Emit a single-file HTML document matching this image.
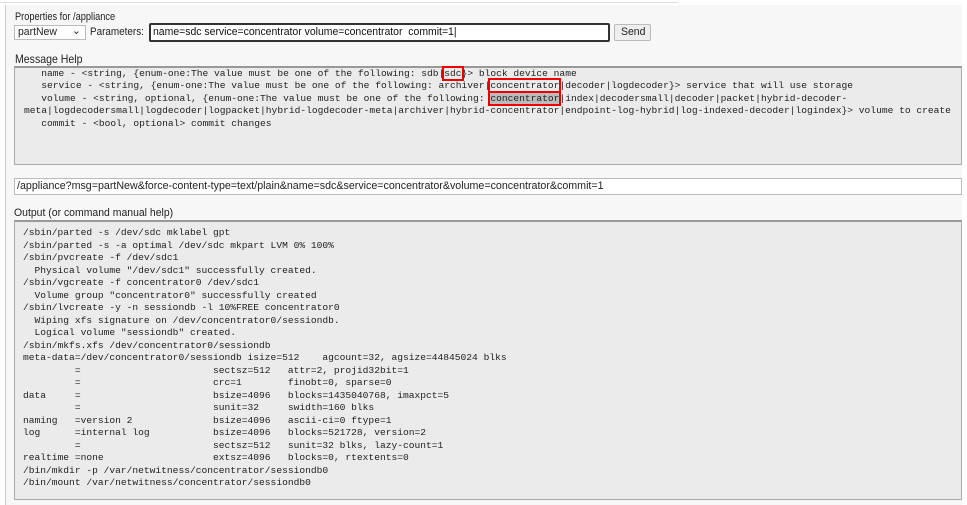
<!DOCTYPE html>
<html><head><meta charset="utf-8"><style>
*{margin:0;padding:0;box-sizing:border-box}
body{width:967px;height:492px;overflow:hidden;background:#fff;position:relative;font-family:"Liberation Sans",Arial,sans-serif;color:#222}
.abs{position:absolute}
.topline{left:0;top:0;width:678px;height:3px;border-bottom:1px solid #ddd}
.panel{left:5px;top:5px;width:957px;height:500px;background:#f7f7f7;border-left:1px solid #ccc}
.lbl{font-size:11px;white-space:nowrap;transform:scaleX(.95);transform-origin:left top;line-height:13px}
.ta{background:#ebebeb;border:1px solid #aaa;border-top:2px solid #999}
.mono{font-family:"Liberation Mono","DejaVu Sans Mono",monospace;font-size:9.6px;line-height:12.4px;white-space:pre;color:#222}
.rb{outline:2px solid #e00;outline-offset:0}
</style></head><body>
<div class="abs topline"></div>
<div class="abs panel"></div>
<div class="abs lbl" style="left:15px;top:11px;transform:scaleX(.84)">Properties for /appliance</div>
<div class="abs" style="left:14px;top:25px;width:72px;height:15px;border:1px solid #bbb;background:#fff"></div>
<div class="abs lbl" style="left:18px;top:26px">partNew</div>
<div class="abs lbl" style="left:72px;top:25px">&#8964;</div>
<div class="abs lbl" style="left:90px;top:26px;transform:scaleX(.9)">Parameters:</div>
<div class="abs" style="left:149px;top:23px;width:461px;height:19px;border:2px solid #333;border-radius:2px;background:#fff"></div>
<div class="abs lbl" style="left:153px;top:26px;color:#111">name=sdc service=concentrator volume=concentrator&nbsp; commit=1|</div>
<div class="abs" style="left:614px;top:24px;width:37px;height:17px;border:1px solid #bbb;border-radius:2px;background:#eee"></div>
<div class="abs lbl" style="left:621px;top:26px">Send</div>
<div class="abs lbl" style="left:15px;top:53px;font-size:12px;transform:scaleX(.88)">Message Help</div>
<div class="abs ta" style="left:14px;top:66px;width:948px;height:99px"></div>
<div class="abs mono" style="left:24px;top:68px">   name - &lt;string, {enum-one:The value must be one of the following: sdb|<span class="rb">sdc</span>}&gt; block device name
   service - &lt;string, {enum-one:The value must be one of the following: archiver|<span class="rb">concentrator</span>|decoder|logdecoder}&gt; service that will use storage
   volume - &lt;string, optional, {enum-one:The value must be one of the following: <span class="rb" style="background:#bbb">concentrator</span>|index|decodersmall|decoder|packet|hybrid-decoder-
meta|logdecodersmall|logdecoder|logpacket|hybrid-logdecoder-meta|archiver|hybrid-concentrator|endpoint-log-hybrid|log-indexed-decoder|logindex}&gt; volume to create
   commit - &lt;bool, optional&gt; commit changes</div>
<div class="abs" style="left:14px;top:178px;width:948px;height:17px;border:1px solid #bbb;background:#fff"></div>
<div class="abs lbl" style="left:17px;top:180px;transform:scaleX(.97)">/appliance?msg=partNew&amp;force-content-type=text/plain&amp;name=sdc&amp;service=concentrator&amp;volume=concentrator&amp;commit=1</div>
<div class="abs lbl" style="left:14px;top:207px">Output (or command manual help)</div>
<div class="abs ta" style="left:14px;top:220px;width:948px;height:280px"></div>
<div class="abs mono" style="left:23px;top:227px;line-height:12.5px">/sbin/parted -s /dev/sdc mklabel gpt
/sbin/parted -s -a optimal /dev/sdc mkpart LVM 0% 100%
/sbin/pvcreate -f /dev/sdc1
  Physical volume "/dev/sdc1" successfully created.
/sbin/vgcreate -f concentrator0 /dev/sdc1
  Volume group "concentrator0" successfully created
/sbin/lvcreate -y -n sessiondb -l 10%FREE concentrator0
  Wiping xfs signature on /dev/concentrator0/sessiondb.
  Logical volume "sessiondb" created.
/sbin/mkfs.xfs /dev/concentrator0/sessiondb
meta-data=/dev/concentrator0/sessiondb isize=512    agcount=32, agsize=44845024 blks
         =                       sectsz=512   attr=2, projid32bit=1
         =                       crc=1        finobt=0, sparse=0
data     =                       bsize=4096   blocks=1435040768, imaxpct=5
         =                       sunit=32     swidth=160 blks
naming   =version 2              bsize=4096   ascii-ci=0 ftype=1
log      =internal log           bsize=4096   blocks=521728, version=2
         =                       sectsz=512   sunit=32 blks, lazy-count=1
realtime =none                   extsz=4096   blocks=0, rtextents=0
/bin/mkdir -p /var/netwitness/concentrator/sessiondb0
/bin/mount /var/netwitness/concentrator/sessiondb0</div>
</body></html>
